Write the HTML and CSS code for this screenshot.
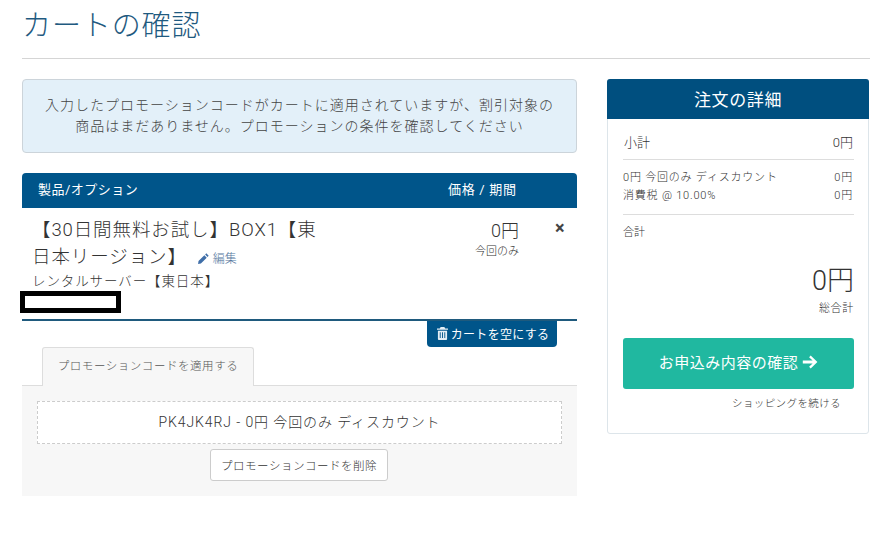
FILE: index.html
```html
<!DOCTYPE html>
<html lang="ja">
<head>
    <meta charset="UTF-8">
    <title>カートの確認</title>
    <link rel="stylesheet" href="styles.css">
</head>
<body>
    <div class="container">
        <h1>カートの確認</h1>

        <div class="columns">
            <div class="main">
                <div class="alert">入力したプロモーションコードがカートに適用されていますが、割引対象の<br>商品はまだありません。プロモーションの条件を確認してください</div>

                <div class="cart-head">
                    <span class="head-product">製品/オプション</span>
                    <span class="head-price">価格 / 期間</span>
                </div>

                <div class="cart-item">
                    <div class="item-info">
                        <div class="item-name">【30日間無料お試し】BOX1【東日本リージョン】<a class="edit" href="#"><svg class="icon-pencil" viewBox="0 0 12 12"><path d="M8.600 1.200l2.200 2.200-1.100 1.100-2.200-2.200zM6.800 3L9 5.200 3.600 10.600 1 11l.4-2.600z"/></svg>編集</a></div>
                        <div class="item-group">レンタルサーバー【東日本】</div>
                        <div class="redacted"></div>
                    </div>
                    <div class="item-price">
                        <div class="price">0円</div>
                        <div class="cycle">今回のみ</div>
                    </div>
                    <div class="item-remove">×</div>
                </div>

                <div class="empty-row">
                    <a class="btn-empty" href="#"><svg class="icon-trash" viewBox="0 0 12 14"><path d="M4 0h4l1 1.500h3V3H0V1.500h3zM1 4h10v9a1 1 0 0 1-1 1H2a1 1 0 0 1-1-1zm2 1.500V12h1V5.500zm2.500 0V12h1V5.500zm2.500 0V12h1V5.500z" fill-rule="evenodd"/></svg>カートを空にする</a>
                </div>

                <div class="tabs">
                    <div class="tab">プロモーションコードを適用する</div>
                </div>
                <div class="promo">
                    <div class="promo-code">PK4JK4RJ - 0円 今回のみ ディスカウント</div>
                    <button class="btn-remove">プロモーションコードを削除</button>
                </div>
            </div>

            <div class="summary">
                <div class="summary-title">注文の詳細</div>
                <div class="summary-body">
                    <div class="row row-sub"><span>小計</span><span>0円</span></div>
                    <div class="rows">
                        <div class="row"><span>0円 今回のみ ディスカウント</span><span>0円</span></div>
                        <div class="row"><span>消費税 @ 10.00%</span><span>0円</span></div>
                    </div>
                    <div class="recurring">合計</div>
                    <div class="total">0円</div>
                    <div class="total-label">総合計</div>
                    <a class="btn-checkout" href="#">お申込み内容の確認 <svg class="icon-arrow" viewBox="0 0 16 14"><path d="M8.700 0.600L15.400 7 8.700 13.400 7.100 11.800 10.600 8.400H0.800V5.600H10.600L7.100 2.200z"/></svg></a>
                    <a class="continue" href="#">ショッピングを続ける</a>
                </div>
            </div>
        </div>
    </div>
</body>
</html>
```

FILE: styles.css
```css
body {
    font-family: "Roboto", "Noto Sans CJK JP", sans-serif;
    background-color: #fff;
    margin: 0;
    color: #333;
}
a {
    text-decoration: none;
}
.container {
    width: 848px;
    margin-left: 22px;
}
h1 {
    margin: 0;
    height: 59px;
    box-sizing: border-box;
    padding-top: 6px;
    border-bottom: 1px solid #d5d5d5;
    font-size: 29px;
    line-height: 41px;
    font-weight: 300;
    letter-spacing: 0.9px;
    color: #1f5a80;
}
.columns {
    display: flex;
    align-items: flex-start;
    margin-top: 20px;
}
.main {
    width: 555px;
}
.alert {
    box-sizing: border-box;
    height: 74px;
    padding-top: 15px;
    background-color: #e3f0f9;
    border: 1px solid #ccd4da;
    border-radius: 4px;
    text-align: center;
    font-size: 14px;
    line-height: 21px;
    letter-spacing: 1px;
    font-weight: 300;
    color: #444;
}
.cart-head {
    display: flex;
    height: 35px;
    margin-top: 20px;
    background-color: #00558a;
    border-radius: 4px 4px 0 0;
    color: #fff;
    font-size: 13px;
    line-height: 34px;
    font-weight: 400;
}
.head-product {
    width: 410px;
    padding-left: 16px;
    letter-spacing: 0.5px;
}
.head-price {
    letter-spacing: 0.7px;
}
.cart-item {
    display: flex;
    height: 111px;
    border-bottom: 2px solid #1f5a7d;
}
.item-info {
    width: 298px;
    padding-left: 10px;
    padding-top: 9px;
}
.item-name {
    font-size: 18.500px;
    line-height: 27px;
    font-weight: 300;
    letter-spacing: 0.9px;
    color: #333;
}
.edit {
    margin-left: 10px;
    font-size: 12px;
    letter-spacing: 0;
    color: #5577a0;
}
.icon-pencil {
    width: 13px;
    height: 13px;
    fill: #3f6ea8;
    margin-right: 3px;
    vertical-align: -2px;
}
.item-group {
    font-size: 13.500px;
    line-height: 17px;
    letter-spacing: 0.9px;
    font-weight: 300;
}
.redacted {
    box-sizing: border-box;
    width: 101px;
    height: 22px;
    margin-top: 1px;
    margin-left: -12px;
    border: 5px solid #000;
    background-color: #fff;
}
.item-price {
    width: 167px;
    padding-top: 11px;
    margin-left: 22px;
    text-align: right;
}
.price {
    font-size: 18px;
    line-height: 24px;
    font-weight: 300;
}
.cycle {
    font-size: 11px;
    line-height: 14px;
    margin-top: 2px;
    font-weight: 300;
}
.item-remove {
    margin-left: 36px;
    padding-top: 10px;
    font-size: 18px;
    line-height: 20px;
    font-weight: 700;
    color: #444;
}
.empty-row {
    display: flex;
    justify-content: flex-end;
    padding-right: 20px;
}
.btn-empty {
    display: flex;
    align-items: center;
    justify-content: center;
    box-sizing: border-box;
    width: 130px;
    height: 26px;
    padding: 0 0 2px 2px;
    background-color: #00558a;
    border-radius: 0 0 4px 4px;
    color: #fff;
    font-size: 12px;
    letter-spacing: 0.3px;
}
.icon-trash {
    width: 11px;
    height: 13px;
    fill: #e4eef5;
    margin-right: 3px;
}
.tabs {
    display: flex;
    height: 39px;
    box-sizing: border-box;
    padding-left: 20px;
    border-bottom: 1px solid #ddd;
}
.tab {
    box-sizing: border-box;
    width: 212px;
    height: 39px;
    border: 1px solid #ddd;
    border-bottom: none;
    border-radius: 3px 3px 0 0;
    background-color: #f7f7f7;
    text-align: center;
    font-size: 11.500px;
    line-height: 36px;
    letter-spacing: 0.55px;
    font-weight: 300;
    color: #555;
}
.promo {
    height: 110px;
    box-sizing: border-box;
    padding: 15px 15px 0;
    background-color: #f7f7f7;
    text-align: center;
}
.promo-code {
    box-sizing: border-box;
    height: 43px;
    border: 1px dashed #ccc;
    background-color: #fff;
    font-size: 14px;
    line-height: 40px;
    letter-spacing: 0.9px;
    font-weight: 300;
}
.btn-remove {
    box-sizing: border-box;
    display: block;
    width: 178px;
    height: 32px;
    margin: 5px 0 0 173px;
    padding: 0;
    border: 1px solid #ccc;
    border-radius: 3px;
    background-color: #fff;
    font-family: inherit;
    font-size: 11.500px;
    letter-spacing: 0.5px;
    font-weight: 300;
    color: #333;
}
.summary {
    box-sizing: border-box;
    width: 262px;
    height: 355px;
    margin-left: 30px;
    border: 1px solid #dde5ea;
    border-radius: 3px;
}
.summary-title {
    height: 40px;
    margin: -1px -1px 0;
    background-color: #004f7f;
    border-radius: 3px 3px 0 0;
    color: #fff;
    text-align: center;
    font-size: 17px;
    line-height: 42px;
    letter-spacing: 0.6px;
}
.summary-body {
    padding: 0 14px 0 15px;
}
.row {
    display: flex;
    justify-content: space-between;
}
.row-sub {
    height: 41px;
    box-sizing: border-box;
    padding-top: 15px;
    padding-left: 1px;
    padding-right: 1px;
    border-bottom: 1px solid #ddd;
    font-size: 13px;
    line-height: 18px;
    font-weight: 300;
}
.rows {
    height: 55px;
    box-sizing: border-box;
    padding-top: 9px;
    padding-right: 1px;
    border-bottom: 1px solid #ddd;
    font-size: 11px;
    line-height: 17.500px;
    font-weight: 300;
    letter-spacing: 0.8px;
}
.recurring {
    margin-top: 10px;
    font-size: 11px;
    line-height: 16px;
    font-weight: 300;
}
.total {
    margin-top: 22px;
    text-align: right;
    font-size: 27px;
    line-height: 36px;
    font-weight: 300;
}
.total-label {
    margin-top: 2px;
    text-align: right;
    font-size: 11px;
    line-height: 16px;
    font-weight: 300;
    letter-spacing: 0.7px;
}
.btn-checkout {
    display: block;
    height: 51px;
    margin: 21px 0 0;
    background-color: #20b8a0;
    border-radius: 3px;
    color: #fff;
    text-align: center;
    font-size: 15px;
    line-height: 50px;
    font-weight: 400;
    letter-spacing: 0.5px;
}
.icon-arrow {
    width: 16px;
    height: 14px;
    fill: #fff;
    vertical-align: -1px;
}
.continue {
    display: block;
    margin-top: 7px;
    padding-right: 13px;
    text-align: right;
    font-size: 10.500px;
    line-height: 16px;
    letter-spacing: 0.4px;
    font-weight: 300;
    color: #333;
}
```
